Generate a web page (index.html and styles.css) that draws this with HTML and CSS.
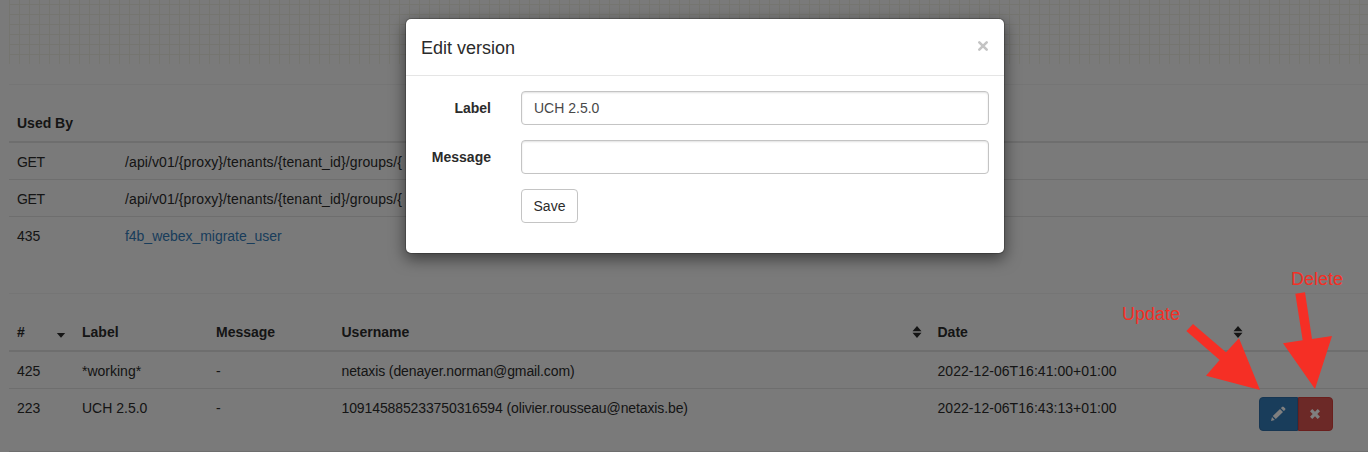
FILE: index.html
```html
<!DOCTYPE html>
<html lang="en">
<head>
<meta charset="utf-8">
<title>Edit version</title>
<link rel="stylesheet" href="styles.css">
</head>
<body>
<main class="page">
  <div class="canvas-grid"></div>
  <section class="panel usage">
    <div class="row head"><div class="cell">Used By</div></div>
    <div class="row"><div class="cell method">GET</div><div class="cell path">/api/v01/{proxy}/tenants/{tenant_id}/groups/{</div></div>
    <div class="row"><div class="cell method">GET</div><div class="cell path">/api/v01/{proxy}/tenants/{tenant_id}/groups/{</div></div>
    <div class="row"><div class="cell">435</div><div class="cell"><a class="link">f4b_webex_migrate_user</a></div></div>
  </section>
  <section class="panel versions">
    <div class="row head">
      <div class="cell sortable"><span>#</span><svg class="sort" viewBox="0 0 10 14"><path d="M.8 8h8.4L5 12.7z"/></svg></div>
      <div class="cell">Label</div>
      <div class="cell">Message</div>
      <div class="cell sortable"><span>Username</span><svg class="sort" viewBox="0 0 10 14"><path d="M.5 6.3h9L5 1zM.5 7.7h9L5 13z"/></svg></div>
      <div class="cell sortable"><span>Date</span><svg class="sort" viewBox="0 0 10 14"><path d="M.5 6.3h9L5 1zM.5 7.7h9L5 13z"/></svg></div>
      <div class="cell"></div>
    </div>
    <div class="row">
      <div class="cell">425</div><div class="cell">*working*</div><div class="cell">-</div>
      <div class="cell user">netaxis (denayer.norman@gmail.com)</div>
      <div class="cell date">2022-12-06T16:41:00+01:00</div><div class="cell"></div>
    </div>
    <div class="row last">
      <div class="cell">223</div><div class="cell">UCH 2.5.0</div><div class="cell">-</div>
      <div class="cell user">109145885233750316594 (olivier.rousseau@netaxis.be)</div>
      <div class="cell date">2022-12-06T16:43:13+01:00</div>
      <div class="cell actions">
        <button class="action edit" aria-label="Update"><svg width="16" height="16" viewBox="0 0 16 16"><path d="M1 15l1-4 2.8 3zM2.8 10.1l7.2-7.2 3 3-7.2 7.2zM10.8 2.1l1.3-1.2q.8-.7 1.6 0l1.4 1.4q.7.8 0 1.6l-1.3 1.2z"/></svg></button>
        <button class="action remove" aria-label="Delete"><svg width="12" height="12" viewBox="0 0 12 12"><path d="M3.3 1L6 3.7 8.7 1 11 3.3 8.3 6 11 8.7 8.7 11 6 8.3 3.3 11 1 8.7 3.7 6 1 3.3z"/></svg></button>
      </div>
    </div>
  </section>
</main>
<div class="backdrop"></div>
<div class="modal" role="dialog">
  <header class="modal-head"><h4 class="modal-title">Edit version</h4><svg class="close" viewBox="0 0 12 12"><path d="M2.3 2.3l7.4 7.4M9.7 2.3L2.3 9.7"/></svg></header>
  <form class="form">
    <label class="form-label" for="label">Label</label><input class="field" id="label" value="UCH 2.5.0">
    <label class="form-label" for="message">Message</label><input class="field" id="message">
    <button class="save" type="button">Save</button>
  </form>
</div>
<div class="note update">Update</div>
<div class="note delete">Delete</div>
<svg class="arrows" viewBox="0 0 774 576"><path d="M249 192L348 277 387 235 450 390 288 347 329 300 229 213zM556 101L585 97 606 237 666 228 615 387 519 250 578 241z"/></svg>
</body>
</html>
```
FILE: styles.css
```css
* { box-sizing: border-box; }
body {
  margin: 0;
  width: 1368px;
  height: 452px;
  overflow: hidden;
  position: relative;
  background: #f4f4f4;
  color: #2b2b2b;
  font: 14px/20px "Liberation Sans", Arial, sans-serif;
}
.page { padding-left: 9px; height: 452px; overflow: hidden; }
.canvas-grid {
  height: 64px;
  background-image:
    linear-gradient(to right, #ebebe0 1px, transparent 1px),
    linear-gradient(to bottom, #ebebe0 1px, transparent 1px);
  background-size: 10px 10px;
  background-position: 0 0, 0 4px;
}
.panel { border-top: 1px solid #ebebeb; }
.usage { margin-top: 20px; height: 209px; padding-top: 20px; }
.versions { padding-top: 20px; }
.row { display: grid; border-bottom: 1px solid #ddd; }
.usage .row { grid-template-columns: 108px 1fr; }
.usage .row:last-child { border-bottom: 0; }
.versions .row { grid-template-columns: 65px 134px 125.5px 596px 321px 1fr; }
.cell { padding: 9px 8px 7px; height: 36px; white-space: nowrap; }
.row.head { border-bottom: 2px solid #ddd; font-weight: bold; }
.head .cell { padding: 8px; }
.last .cell { height: 62px; }
.method { letter-spacing: -.4px; }
.path { letter-spacing: .1px; }
.user { letter-spacing: -.11px; }
.date { letter-spacing: .05px; }
.sortable { display: flex; justify-content: space-between; }
.sort { width: 10px; height: 14px; margin-top: 3px; fill: #2b2b2b; }
.link { color: #337ab7; letter-spacing: -.03px; }
.last .actions { display: flex; padding-top: 8px; }
.action {
  height: 34px;
  padding: 0;
  border: 1px solid;
  display: flex;
  align-items: center;
  justify-content: center;
}
.action svg { fill: #fff; }
.edit { width: 39px; background: #337ab7; border-color: #2e6da4; border-radius: 4px 0 0 4px; }
.remove { width: 35px; background: #d9534f; border-color: #d43f3a; border-radius: 0 4px 4px 0; }
.backdrop { position: absolute; inset: 0; background: rgba(0, 0, 0, .5); }
.modal {
  position: absolute;
  left: 405px;
  top: 18px;
  width: 600px;
  height: 236px;
  background: #fff;
  background-clip: padding-box;
  border: 1px solid rgba(0, 0, 0, .2);
  border-radius: 6px;
  box-shadow: 0 5px 15px rgba(0, 0, 0, .5);
}
.modal-head {
  display: flex;
  justify-content: space-between;
  height: 57px;
  padding: 16px 15px 0;
  border-bottom: 1px solid #e5e5e5;
}
.modal-title { margin: 0; font-size: 18px; font-weight: normal; line-height: 26px; }
.close { width: 12px; height: 12px; margin-top: 5px; fill: none; stroke: #c4c4c4; stroke-width: 2.6; stroke-linecap: round; }
.form {
  display: grid;
  grid-template-columns: 70px 468px;
  column-gap: 30px;
  row-gap: 15px;
  padding: 15px;
}
.form-label { padding-top: 7px; text-align: right; font-weight: bold; }
.field {
  height: 34px;
  padding: 6px 12px;
  border: 1px solid #c4c4c4;
  border-radius: 4px;
  box-shadow: inset 0 1px 2px rgba(0, 0, 0, .12);
  color: #484848;
  font: inherit;
}
.save {
  grid-column: 2;
  width: 57px;
  height: 34px;
  padding: 0;
  border: 1px solid #c4c4c4;
  border-radius: 4px;
  background: #fff;
  color: #2b2b2b;
  font: inherit;
}
.note { position: absolute; color: #f52f25; font-size: 18px; line-height: 22px; }
.update { left: 1122px; top: 303px; }
.delete { left: 1291px; top: 268px; }
.arrows { position: absolute; left: 1110px; top: 260px; width: 258px; height: 192px; fill: #f52f25; }
```
